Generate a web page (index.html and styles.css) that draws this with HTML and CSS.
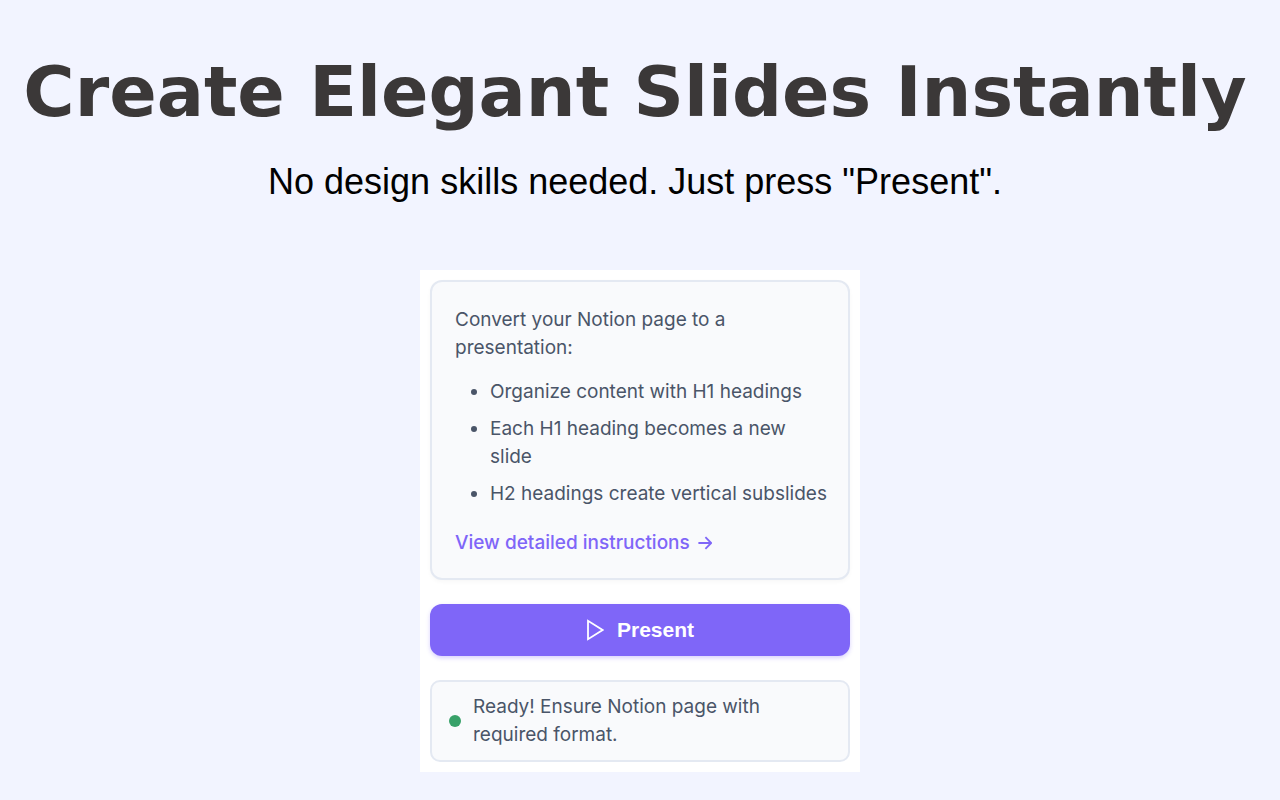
FILE: index.html
```html
<!DOCTYPE html>
<html lang="en">
<head>
<meta charset="utf-8">
<meta name="viewport" content="width=device-width, initial-scale=1">
<title>Create Elegant Slides Instantly</title>
<link rel="stylesheet" href="styles.css">
</head>
<body>
<main class="page">
  <header class="hero">
    <h1 class="hero-title">Create Elegant Slides Instantly</h1>
    <p class="hero-subtitle">No design skills needed. Just press "Present".</p>
  </header>
  <section class="panel">
    <div class="card">
      <p class="card-intro">Convert your Notion page to a presentation:</p>
      <ul class="steps">
        <li>Organize content with H1 headings</li>
        <li>Each H1 heading becomes a new slide</li>
        <li>H2 headings create vertical subslides</li>
      </ul>
      <a class="card-link" href="#instructions">View detailed instructions
        <svg class="arrow" viewBox="0 0 14 14" aria-hidden="true"><path d="M0.4 7H13M7.4 1.2L13.2 7L7.4 12.8"/></svg>
      </a>
    </div>
    <button class="present" type="button">
      <svg class="play" viewBox="0 0 18 22" aria-hidden="true"><path d="M2 1.8V20.2L16.6 11Z"/></svg>
      Present
    </button>
    <div class="status" role="status">
      <span class="dot"></span>
      <p class="status-text">Ready! Ensure Notion page with required format.</p>
    </div>
  </section>
</main>
</body>
</html>
```
FILE: styles.css
```css
* {
  box-sizing: border-box;
}

body {
  margin: 0;
  background: #f2f4ff;
  font-family: Inter, "Liberation Sans", sans-serif;
}

.page {
  display: flex;
  flex-direction: column;
  align-items: center;
  gap: 65px;
  padding: 48px 0 28px;
}

.hero {
  padding-right: 10px;
  text-align: center;
}

.hero-title {
  margin: 0;
  color: #3b3838;
  font-family: "DejaVu Sans", sans-serif;
  font-size: 70px;
  font-weight: 700;
  line-height: 88px;
}

.hero-subtitle {
  margin: 23px 0 0;
  color: #000;
  font-family: "Liberation Sans", Arial, sans-serif;
  font-size: 36px;
  line-height: 46px;
}

.panel {
  display: flex;
  flex-direction: column;
  gap: 24px;
  width: 100%;
  max-width: 440px;
  padding: 10px;
  background: #fff;
  color: #4a5568;
  font-size: 19px;
  line-height: 28px;
}

.card {
  padding: 24px 18px 21px 23px;
  border: 2px solid #e4e9f2;
  border-radius: 12px;
  background: #f9fafc;
  box-shadow: 0 2px 4px rgba(0, 0, 0, 0.03);
}

.card-intro,
.status-text {
  margin: 0;
}

.steps {
  display: grid;
  gap: 9px;
  margin: 16px 0 21px;
  padding-left: 35px;
}

.card-link {
  display: flex;
  align-items: center;
  gap: 8px;
  color: #7f66f8;
  font-weight: 500;
  text-decoration: none;
}

.arrow {
  width: 14px;
  height: 14px;
  fill: none;
  stroke: currentColor;
  stroke-width: 1.8;
}

.present {
  display: flex;
  align-items: center;
  justify-content: center;
  gap: 13px;
  height: 52px;
  border: 0;
  border-radius: 12px;
  background: #7f66f8;
  box-shadow: 0 2px 4px rgba(127, 102, 248, 0.3);
  color: #fff;
  font-family: "Liberation Sans", Arial, sans-serif;
  font-size: 21px;
  font-weight: 700;
}

.play {
  width: 18px;
  height: 22px;
  fill: none;
  stroke: currentColor;
  stroke-width: 1.8;
}

.status {
  display: flex;
  align-items: center;
  gap: 12px;
  padding: 11px 17px;
  border: 2px solid #e4e9f2;
  border-radius: 10px;
  background: #f9fafc;
}

.dot {
  flex: none;
  width: 12px;
  height: 12px;
  border-radius: 50%;
  background: #38a169;
}
```
